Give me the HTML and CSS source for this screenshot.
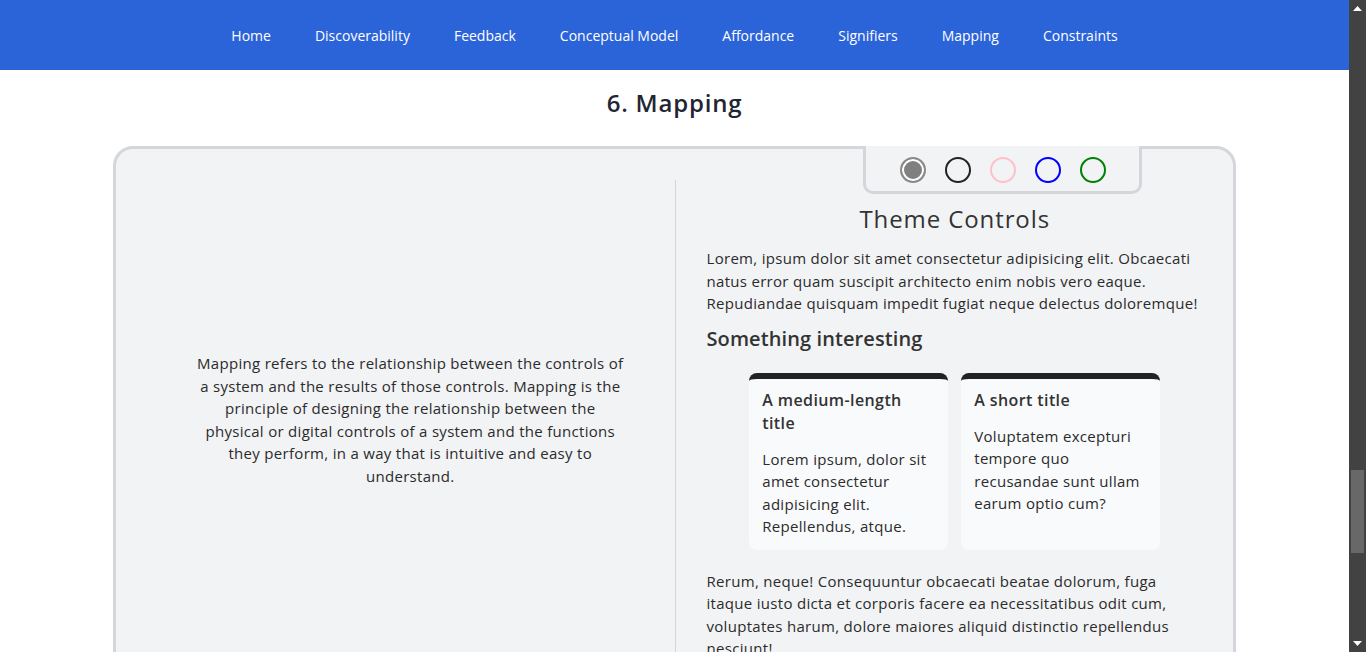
FILE: index.html
```html
<!DOCTYPE html>
<html lang="en">
<head>
<meta charset="utf-8">
<title>Mapping</title>
<link rel="stylesheet" href="styles.css">
</head>
<body>
<nav class="topnav">
  <ul class="topnav-list">
    <li><a href="#">Home</a></li>
    <li><a href="#">Discoverability</a></li>
    <li><a href="#">Feedback</a></li>
    <li><a href="#">Conceptual Model</a></li>
    <li><a href="#">Affordance</a></li>
    <li><a href="#">Signifiers</a></li>
    <li><a href="#">Mapping</a></li>
    <li><a href="#">Constraints</a></li>
  </ul>
</nav>
<main class="content">
  <section class="section">
    <h2 class="section-title">6. Mapping</h2>
    <div class="panel">
      <div class="panel-left">
        <p class="panel-left-text">Mapping refers to the relationship between the controls of a system and the results of those controls. Mapping is the principle of designing the relationship between the physical or digital controls of a system and the functions they perform, in a way that is intuitive and easy to understand.</p>
      </div>
      <div class="panel-right">
        <div class="theme-tab">
          <span class="swatch swatch-gray is-selected"></span>
          <span class="swatch swatch-black"></span>
          <span class="swatch swatch-pink"></span>
          <span class="swatch swatch-blue"></span>
          <span class="swatch swatch-green"></span>
        </div>
        <h3 class="theme-title">Theme Controls</h3>
        <p class="body-text">Lorem, ipsum dolor sit amet consectetur adipisicing elit. Obcaecati natus error quam suscipit architecto enim nobis vero eaque. Repudiandae quisquam impedit fugiat neque delectus doloremque!</p>
        <h4 class="sub-title">Something interesting</h4>
        <div class="cards">
          <article class="card">
            <h5 class="card-title">A medium-length title</h5>
            <p class="card-text">Lorem ipsum, dolor sit amet consectetur adipisicing elit. Repellendus, atque.</p>
          </article>
          <article class="card">
            <h5 class="card-title">A short title</h5>
            <p class="card-text">Voluptatem excepturi tempore quo recusandae sunt ullam earum optio cum?</p>
          </article>
        </div>
        <p class="body-text body-text-last">Rerum, neque! Consequuntur obcaecati beatae dolorum, fuga itaque iusto dicta et corporis facere ea necessitatibus odit cum, voluptates harum, dolore maiores aliquid distinctio repellendus nesciunt!</p>
      </div>
    </div>
  </section>
</main>
<div class="scrollbar" aria-hidden="true">
  <div class="scrollbar-btn">
    <svg width="9" height="5" viewBox="0 0 9 5"><path d="M0 5 L4.5 0 L9 5 Z" fill="#ffffff"/></svg>
  </div>
  <div class="scrollbar-track"><div class="scrollbar-thumb"></div></div>
  <div class="scrollbar-btn">
    <svg width="9" height="5" viewBox="0 0 9 5"><path d="M0 0 L9 0 L4.5 5 Z" fill="#ffffff"/></svg>
  </div>
</div>
</body>
</html>
```
FILE: styles.css
```css
* { box-sizing: border-box; }

html { background: #ffffff; }

body {
  margin: 0 17px 0 0;
  font-family: "Open Sans", "Liberation Sans", sans-serif;
  color: #2b2b2b;
  background: #ffffff;
}

.scrollbar {
  position: fixed;
  top: 0;
  right: 0;
  width: 17px;
  height: 100vh;
  background: #424242;
  display: flex;
  flex-direction: column;
  z-index: 10;
}

.scrollbar-btn {
  height: 17px;
  display: flex;
  align-items: center;
  justify-content: center;
}

.scrollbar-track {
  flex: 1;
  padding: 0 2px;
}

.scrollbar-thumb {
  margin-top: 453px;
  height: 83px;
  background: #686868;
}

.topnav {
  height: 70px;
  background: #2b63d9;
  display: flex;
  align-items: center;
  justify-content: center;
}

.topnav-list {
  list-style: none;
  margin: 0;
  padding: 0;
  display: flex;
  gap: 44px;
}

.topnav-list a {
  color: #ffffff;
  text-decoration: none;
  font-size: 14px;
  font-weight: 500;
}

.content { padding-bottom: 200px; }

.section { padding-top: 15px; }

.section-title {
  margin: 0 0 25px;
  text-align: center;
  font-size: 24px;
  line-height: 36px;
  font-weight: 600;
  letter-spacing: 0.8px;
  color: #1f2633;
}

.panel {
  position: relative;
  margin: 0 113px;
  border: 3px solid #d4d6dc;
  border-radius: 20px;
  background: #f2f3f5;
  padding: 31px 0 40px;
  display: grid;
  grid-template-columns: 1fr 1fr;
}

.panel-left {
  display: flex;
  align-items: center;
  justify-content: center;
  padding: 0 30px 0 60px;
}

.panel-left-text {
  margin: 0;
  max-width: 430px;
  text-align: center;
  font-size: 15px;
  line-height: 22.5px;
  letter-spacing: 0.3px;
}

.panel-right {
  border-left: 1px solid #d4d6dc;
  padding: 0 30px 0 31px;
}

.theme-tab {
  position: absolute;
  top: -3px;
  right: 91px;
  width: 279px;
  height: 48px;
  border: 3px solid #d4d6dc;
  border-top: none;
  border-radius: 0 0 10px 10px;
  background: #f2f3f5;
  display: flex;
  align-items: center;
  justify-content: center;
  gap: 19px;
  padding-top: 2px;
}

.swatch {
  width: 26px;
  height: 26px;
  border-radius: 50%;
  border: 2px solid #222;
}
.swatch-gray { border-color: #8a8a8a; }
.swatch-gray.is-selected { background: #808080; box-shadow: inset 0 0 0 2px #ffffff; }
.swatch-black { border-color: #222222; }
.swatch-pink { border-color: #ffc0cb; }
.swatch-blue { border-color: #0000ff; }
.swatch-green { border-color: #008000; }

.theme-title {
  margin: 21px 0 10px;
  text-align: center;
  font-size: 24px;
  line-height: 36px;
  font-weight: 400;
  letter-spacing: 0.9px;
  color: #333333;
}

.body-text {
  margin: 0;
  font-size: 15px;
  line-height: 22.5px;
  letter-spacing: 0.3px;
}

.sub-title {
  margin: 9px 0 19px;
  font-size: 20px;
  line-height: 30px;
  font-weight: 600;
  letter-spacing: 0.1px;
  color: #333333;
}

.cards {
  display: flex;
  justify-content: center;
  gap: 13px;
  margin-bottom: 20px;
}

.card {
  width: 199px;
  background: #f9fafb;
  border-top: 6px solid #222222;
  border-radius: 8px;
  padding: 10px 13px 12px;
}

.card-title {
  margin: 0 0 13px;
  font-size: 16px;
  line-height: 23px;
  font-weight: 600;
  letter-spacing: 0.4px;
  color: #333333;
}

.card-text {
  margin: 0;
  font-size: 15px;
  line-height: 22.5px;
  letter-spacing: 0.3px;
}
```
